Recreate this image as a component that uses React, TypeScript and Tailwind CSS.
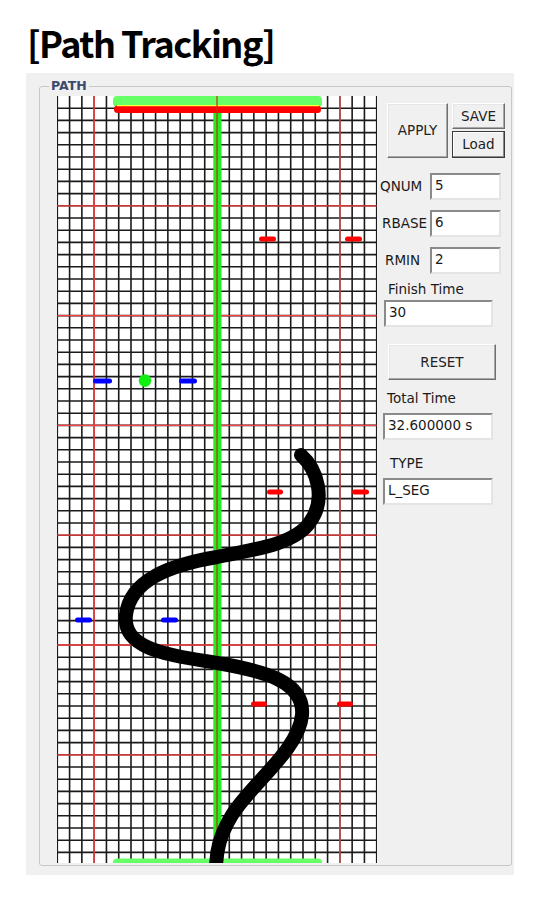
import React from "react";

const X0 = 57.3;
const Y0 = 96;
const CW = 12.285;
const CH = 12.2;
const BOTTOM = 863;
const RIGHT = X0 + CW * 26;

const redDashes = [
  [259, 276, 239],
  [345, 362, 239],
  [267, 283, 492],
  [352, 369, 492],
  [251, 267, 704],
  [337, 353, 704],
];

const blueDashes = [
  [93, 112, 381],
  [179, 197, 381],
  [75, 92, 620],
  [161, 178, 620],
];

function PathCanvas() {
  const vx = Array.from({ length: 27 }, (_, i) => X0 + CW * i);
  const hy = Array.from({ length: 62 }, (_, j) => Y0 + CH * (j + 1));

  return (
    <svg width={320} height={767} viewBox="57 96 320 767" className="block shrink-0">
      <rect x={X0} y={Y0} width={RIGHT - X0} height={BOTTOM - Y0} fill="#ffffff" />
      {/* grid */}
      {hy.map((y, j) => (
        <line key={"h" + j} x1={X0} x2={RIGHT} y1={y} y2={y} stroke="#1a1a1a" strokeWidth={1.6} />
      ))}
      {vx.map((x, i) => (
        <line key={"v" + i} x1={x} x2={x} y1={Y0} y2={BOTTOM} stroke="#1a1a1a" strokeWidth={1.6} />
      ))}
      {/* red guide lines */}
      {hy
        .filter((_, j) => (j + 1) % 9 === 0)
        .map((y, j) => (
          <line key={"rh" + j} x1={X0} x2={RIGHT} y1={y} y2={y} stroke="#ff4040" strokeWidth={1.3} />
        ))}
      {[3, 23].map((i) => (
        <line key={"rv" + i} x1={vx[i]} x2={vx[i]} y1={Y0} y2={BOTTOM} stroke="#ff4a4a" strokeWidth={1.3} />
      ))}

      {/* centre lane */}
      <rect x={213.3} y={Y0} width={8.2} height={BOTTOM - Y0} fill="#22ee22" />

      {/* start / goal bars */}
      <rect x={113} y={96} width={209} height={11} rx={4} fill="#66ff66" />
      <rect x={114} y={105.5} width={207} height={7.5} rx={3.5} fill="#ff0000" />
      <line x1={117} x2={319} y1={105.6} y2={105.6} stroke="#ffff33" strokeWidth={1.2} />
      <rect x={113} y={858.5} width={209} height={9} rx={4} fill="#66ff66" />

      <line x1={vx[13]} x2={vx[13]} y1={Y0} y2={BOTTOM} stroke="#c0301a" strokeWidth={1.2} />

      {/* markers */}
      {redDashes.map(([a, b, y], k) => (
        <line key={"rd" + k} x1={a + 2.5} x2={b - 2.5} y1={y} y2={y} stroke="#ff0000" strokeWidth={5} strokeLinecap="round" />
      ))}
      {blueDashes.map(([a, b, y], k) => (
        <line key={"bd" + k} x1={a + 2.5} x2={b - 2.5} y1={y} y2={y} stroke="#0000ff" strokeWidth={5} strokeLinecap="round" />
      ))}
      <circle cx={145} cy={380.6} r={6.3} fill="#11ee11" />

      {/* tracked path */}
      <path
        d="M 301 455 C 318 470, 326 500, 310 522 C 295 545, 250 550, 217 557 C 170 565, 130 580, 126 615 C 122 650, 170 655, 217 663 C 265 671, 305 682, 302 715 C 299 750, 250 785, 232 815 C 220 835, 216 850, 216 870"
        fill="none"
        stroke="#000000"
        strokeWidth={14}
        strokeLinecap="round"
      />
    </svg>
  );
}

function WinButton({ label, className, isDefault }: { label: string; className: string; isDefault?: boolean }) {
  return (
    <button
      className={
        "flex items-center justify-center bg-[#f0f0f0] text-[13.5px] text-[#222222] " +
        (isDefault
          ? "border border-[#3c3c3c] shadow-[inset_-1px_-1px_0_#8a8a8a,inset_1px_1px_0_#ffffff] "
          : "border border-t-white border-l-white border-r-[#6f6f6f] border-b-[#6f6f6f] shadow-[inset_-1px_-1px_0_#a8a8a8,inset_1px_1px_0_#e6e6e6] ") +
        className
      }
    >
      {label}
    </button>
  );
}

function WinInput({ value, className }: { value: string; className: string }) {
  return (
    <div
      className={
        "flex h-[27px] items-center border-2 border-t-[#8a8a8a] border-l-[#8a8a8a] border-r-[#e4e4e4] border-b-[#e4e4e4] bg-white pl-[3px] pb-[2px] text-[13.5px] text-[#1a1a1a] " +
        className
      }
    >
      {value}
    </div>
  );
}

function Field({ label, value, pad }: { label: string; value: string; pad: string }) {
  return (
    <div className="flex h-[27px] items-center">
      <span className={"w-[53px] text-[13.5px] text-[#1a1a1a] " + pad}>{label}</span>
      <WinInput value={value} className="w-[71px]" />
    </div>
  );
}

export default function App() {
  return (
    <div className="h-[906px] w-[544px] bg-white font-['DejaVu_Sans',sans-serif]">
      <h1 className="h-[73px] pl-[27px] pt-[20px] font-['Noto_Sans_CJK_KR','Noto_Sans',sans-serif] text-[36px] font-bold leading-[44px] tracking-[-1.5px] text-black">
        [Path Tracking]
      </h1>

      <div className="ml-[26px] h-[802px] w-[488px] bg-[#f0f0f0] pl-[13px] pt-[13px]">
        <div className="relative h-[780px] w-[473px] rounded-[3px] border border-[#c8c8c8] pl-[17px] pt-[9px]">
          <span className="absolute left-[9px] top-[-8px] bg-[#f0f0f0] px-[2px] text-[12.5px] leading-[14px] font-semibold text-[#3b4a6e]">
            PATH
          </span>

          <div className="flex">
            <PathCanvas />

            <div className="flex flex-col">
              <div className="ml-[10px] mt-[7px] flex gap-[4px]">
                <WinButton label="APPLY" className="h-[55px] w-[61px]" />
                <div className="flex flex-col gap-[2px]">
                  <WinButton label="SAVE" className="h-[26px] w-[53px]" />
                  <WinButton label="Load" className="h-[27px] w-[53px]" isDefault />
                </div>
              </div>

              <div className="mt-[15px] flex flex-col gap-[10px]">
                <Field label="QNUM" value="5" pad="pl-[3px]" />
                <Field label="RBASE" value="6" pad="pl-[5px]" />
                <Field label="RMIN" value="2" pad="pl-[8px]" />
              </div>

              <span className="mt-[7px] pl-[11px] text-[13.5px] leading-[16px] text-[#1a1a1a]">Finish Time</span>
              <WinInput value="30" className="ml-[7px] mt-[3px] w-[109px]" />

              <WinButton label="RESET" className="ml-[11px] mt-[17px] h-[36px] w-[108px]" />

              <span className="mt-[10px] pl-[10px] text-[13.5px] leading-[16px] text-[#1a1a1a]">Total Time</span>
              <WinInput value="32.600000 s" className="ml-[6px] mt-[7px] w-[110px]" />

              <span className="mt-[15px] pl-[13px] text-[13.5px] leading-[16px] text-[#1a1a1a]">TYPE</span>
              <WinInput value="L_SEG" className="ml-[6px] mt-[7px] w-[110px]" />
            </div>
          </div>
        </div>
      </div>
    </div>
  );
}
